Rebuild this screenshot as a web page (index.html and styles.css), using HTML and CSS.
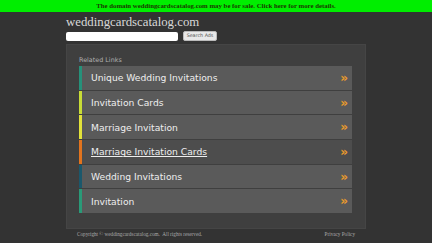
FILE: index.html
```html
<!DOCTYPE html>
<html>
<head>
<meta charset="utf-8">
<link rel="stylesheet" href="styles.css">
</head>
<body>
<div class="topbar">The domain weddingcardscatalog.com may be for sale. Click here for more details.</div>
<div class="wrap">
  <div class="title">weddingcardscatalog.com</div>
  <div class="search">
    <div class="input"></div>
    <div class="btn">Search Ads</div>
  </div>
  <div class="panel">
    <div class="rel">Related Links</div>
    <div class="links">
      <div class="link c1"><span>Unique Wedding Invitations</span><b>»</b></div>
      <div class="link c2"><span>Invitation Cards</span><b>»</b></div>
      <div class="link c3"><span>Marriage Invitation</span><b>»</b></div>
      <div class="link c4 hover"><span>Marriage Invitation Cards</span><b>»</b></div>
      <div class="link c5"><span>Wedding Invitations</span><b>»</b></div>
      <div class="link c6"><span>Invitation</span><b>»</b></div>
    </div>
  </div>
  <div class="footer">
    <span>Copyright © weddingcardscatalog.com.&nbsp; All rights reserved.</span>
    <span>Privacy Policy</span>
  </div>
</div>
</body>
</html>
```
FILE: styles.css
```css
html, body { margin: 0; padding: 0; }
body { background: #333333; width: 432px; height: 243px; overflow: hidden; font-family: "DejaVu Sans", sans-serif; }
.topbar { height: 12px; background: #00ee00; color: #1a3a00; font-family: "Liberation Serif", serif; font-weight: bold; font-size: 6.8px; line-height: 12px; text-align: center; }
.wrap { width: 300px; margin-left: 66px; }
.title { font-family: "Liberation Serif", serif; color: #d8d8d8; font-size: 12.8px; line-height: 14px; margin-top: 3px; height: 16px; }
.search { display: flex; align-items: center; gap: 5px; height: 10px; }
.input { width: 112px; height: 9px; background: #fff; border-radius: 2px; }
.btn { width: 32px; height: 8px; background: #e8e8e8; border: 1px solid #bbb; border-radius: 2px; font-size: 4.8px; line-height: 8px; text-align: center; color: #555; }
.panel { margin-top: 3px; background: #3f3f3f; border: 1px solid #454545; padding: 11px 13px 13px 12px; height: 159px; }
.rel { font-size: 6.4px; color: #b0b0b0; line-height: 8px; height: 10px; }
.links { display: flex; flex-direction: column; gap: 1px; }
.link { height: 23.7px; background: #5a5a5a; border-left: 3px solid #2a8a72; display: flex; align-items: center; justify-content: space-between; padding: 0 4px 0 9px; color: #eeeeee; font-size: 9.2px; }
.link b { color: #e99a2c; font-size: 12px; font-weight: bold; }
.c1 { border-color: #26917a; }
.c2 { border-color: #c8dc36; }
.c3 { border-color: #e2e23a; }
.c4 { border-color: #e2741e; }
.c5 { border-color: #1b586c; }
.c6 { border-color: #2a9a78; }
.hover { background: #4d4d4d; }
.hover span { text-decoration: underline; }
.footer { display: flex; justify-content: space-between; padding: 0 11px; margin-top: 0; font-family: "Liberation Serif", serif; font-size: 5.2px; color: #aaaaaa; line-height: 10px; }
```
